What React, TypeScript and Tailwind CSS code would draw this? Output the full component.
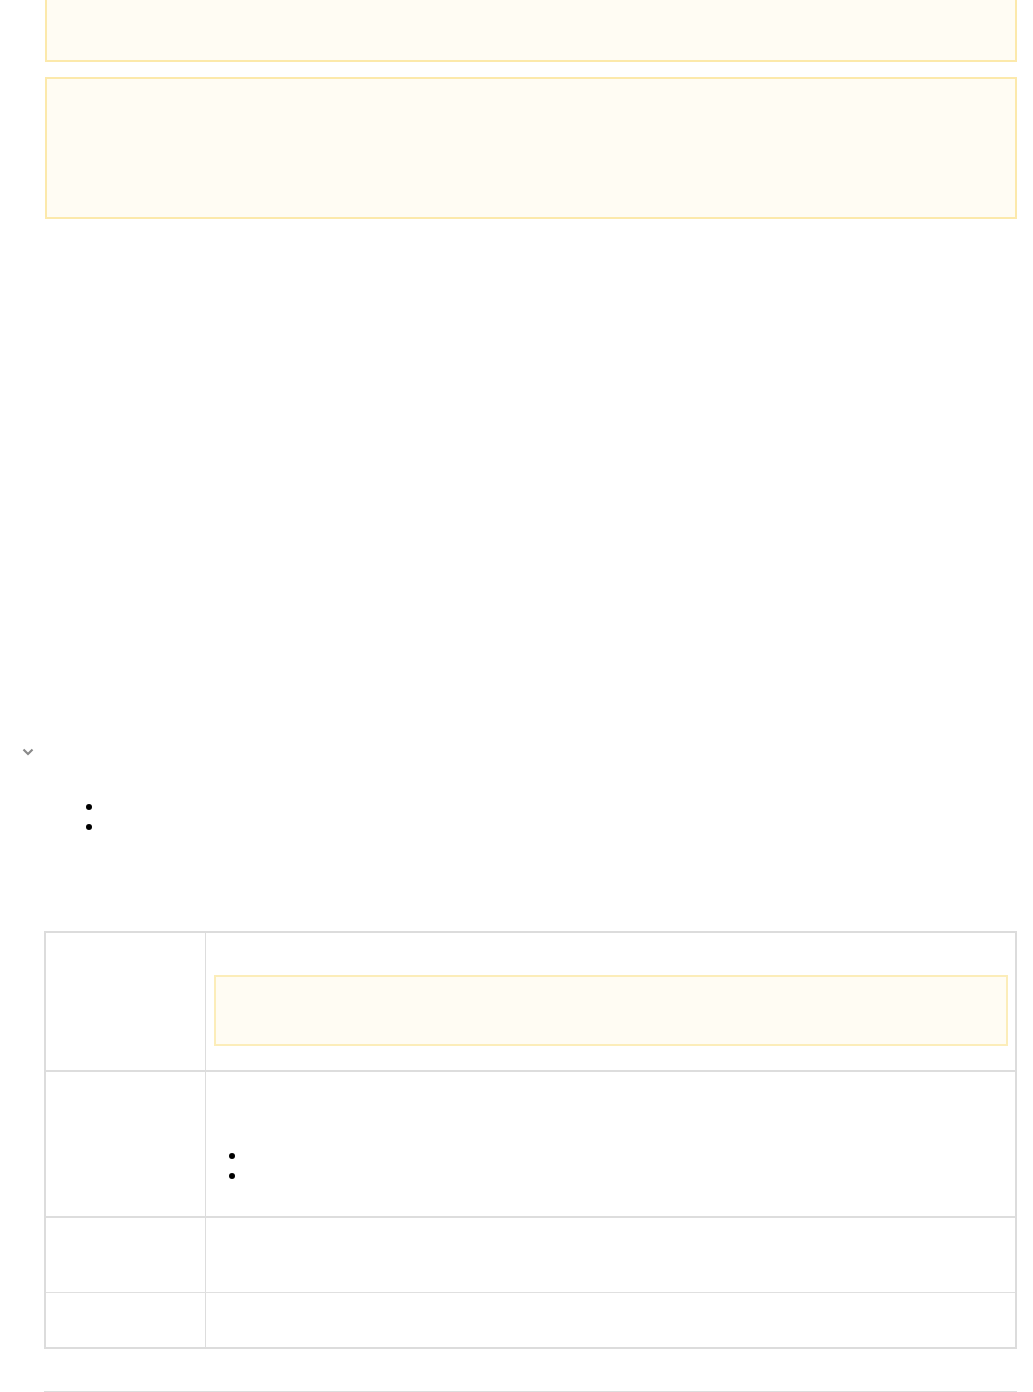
import React from 'react';

const Dot: React.FC = () => <span className="block h-[6px] w-[6px] rounded-full bg-black" />;

interface IBulletListProps {
  count: number;
  className?: string;
}

const BulletList: React.FC<IBulletListProps> = ({ count, className = '' }) => (
  <ul className={`list-none ${className}`}>
    {Array.from({ length: count }).map((_, i) => (
      <li key={i} className="flex h-5 items-center">
        <Dot />
      </li>
    ))}
  </ul>
);

const Notice: React.FC<{ className?: string }> = ({ className = '' }) => (
  <div className={`border-2 border-[#fce9ab] bg-[#fffcf3] ${className}`} />
);

const App: React.FC = () => {
  return (
    <div className="min-h-[1392px] w-[1033px] bg-white font-['Liberation_Sans',Arial,sans-serif] text-base text-black">
      <div className="ml-[45px] mr-[16px]">
        <Notice className="h-[62px] border-t-0" />
        <Notice className="mt-[15px] h-[142px]" />
      </div>

      <button type="button" className="ml-[22px] mt-[529px] block h-[8px] w-[12px] text-[#8a8a8a]">
        <svg width="12" height="8" viewBox="0 0 12 8" fill="none" stroke="currentColor" strokeWidth="2.2">
          <path d="M1.5 1.5L6 6l4.5-4.5" />
        </svg>
      </button>

      <BulletList count={2} className="ml-[86px] mt-[41px]" />

      <div className="ml-[44px] mr-[16px] mt-[94px] border-2 border-[#dcdcdc]">
        <div className="flex h-[139px] border-b-2 border-[#dddddd]">
          <div className="w-[160px] border-r border-[#dddddd]" />
          <div className="flex-1 pl-[8px] pr-[7px] pt-[42px]">
            <div className="h-[71px] border-2 border-[#fcedb9] bg-[#fffcf3]" />
          </div>
        </div>
        <div className="flex h-[146px] border-b-2 border-[#dddddd]">
          <div className="w-[160px] border-r border-[#dddddd]" />
          <div className="flex-1 pl-[23px] pt-[74px]">
            <BulletList count={2} />
          </div>
        </div>
        <div className="flex h-[75px] border-b border-[#e0e0e0]">
          <div className="w-[160px] border-r border-[#dddddd]" />
          <div className="flex-1" />
        </div>
        <div className="flex h-[54px]">
          <div className="w-[160px] border-r border-[#dddddd]" />
          <div className="flex-1" />
        </div>
      </div>

      <hr className="ml-[44px] mr-[16px] mt-[42px] border-0 border-t border-[#dddddd]" />
    </div>
  );
};

export default App;
